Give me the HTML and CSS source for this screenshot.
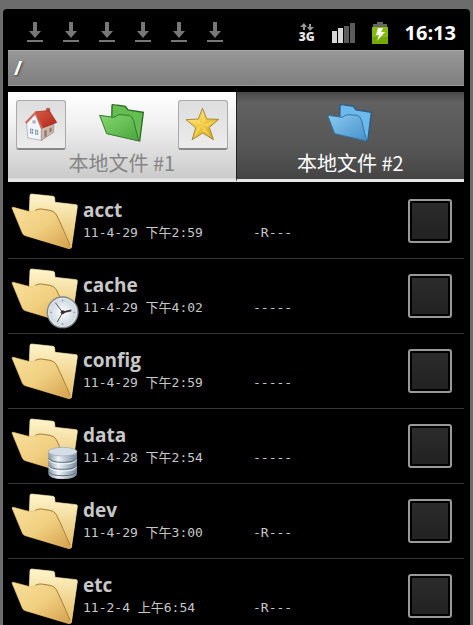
FILE: index.html
```html
<!DOCTYPE html>
<html lang="zh-CN">
<head>
  <meta charset="UTF-8">
  <meta name="viewport" content="width=device-width, initial-scale=1.0">
  <title>本地文件</title>
  <link rel="stylesheet" href="styles.css">
</head>
<body>

<!-- shared icons -->
<svg class="icon-defs" width="0" height="0" aria-hidden="true">
  <defs>
    <linearGradient id="back-fill" x1="0" y1="0" x2="0" y2="1">
      <stop offset="0" stop-color="#fff6cd"/>
      <stop offset="1" stop-color="#e5bb62"/>
    </linearGradient>
    <linearGradient id="front-fill" x1="0" y1="0" x2="1" y2="1">
      <stop offset="0" stop-color="#f9e09c"/>
      <stop offset="0.5" stop-color="#f0cf80"/>
      <stop offset="1" stop-color="#d3a04c"/>
    </linearGradient>
    <linearGradient id="green-fill" x1="0" y1="0" x2="1" y2="1">
      <stop offset="0" stop-color="#84d870"/>
      <stop offset="1" stop-color="#4aa63c"/>
    </linearGradient>
    <linearGradient id="blue-fill" x1="0" y1="0" x2="1" y2="1">
      <stop offset="0" stop-color="#8ccaf1"/>
      <stop offset="1" stop-color="#4590cb"/>
    </linearGradient>
    <linearGradient id="roof-fill" x1="0" y1="0" x2="1" y2="1">
      <stop offset="0" stop-color="#d95a48"/>
      <stop offset="1" stop-color="#ad2415"/>
    </linearGradient>
    <linearGradient id="star-fill" x1="0" y1="0" x2="1" y2="1">
      <stop offset="0" stop-color="#fbec9a"/>
      <stop offset="0.5" stop-color="#f2c93a"/>
      <stop offset="1" stop-color="#cf9618"/>
    </linearGradient>
    <linearGradient id="disk-fill" x1="0" y1="0" x2="1" y2="0">
      <stop offset="0" stop-color="#8595a3"/>
      <stop offset="0.35" stop-color="#eef3f7"/>
      <stop offset="1" stop-color="#74879a"/>
    </linearGradient>
    <radialGradient id="clock-fill">
      <stop offset="0" stop-color="#ffffff"/>
      <stop offset="1" stop-color="#ccd5de"/>
    </radialGradient>
    <symbol id="folder" viewBox="30 36 210 189">
      <path d="M95 42 L160 49 Q164 50 164 55 L165 67 L229 74 Q233 75 232 80 L214 203 L86 140 L90 46 Q91 42 95 42 Z" fill="url(#back-fill)" stroke="#fdeab0" stroke-width="2"/>
      <path d="M36 84 Q36 81 40 82 L90 95 Q98 96 106 92 Q114 87 124 88 L150 92 Q162 94 168 104 Q186 140 212 200 Q214 207 207 206 L76 167 Q70 166 67 159 Z" fill="url(#front-fill)" stroke="#edc36e" stroke-width="2"/>
      <path d="M106 91 Q114 86 124 87 L150 91 Q163 93 169 104 Q187 140 210 196" fill="none" stroke="#a6803c" stroke-width="3"/>
    </symbol>
    <symbol id="clock" viewBox="30 36 210 189">
      <circle cx="188" cy="172" r="48" fill="#7c858d"/>
      <circle cx="188" cy="172" r="42" fill="url(#clock-fill)" stroke="#e4e8ec" stroke-width="4"/>
      <path d="M188 134 v6 M188 204 v6 M150 172 h6 M220 172 h6" stroke="#8c959d" stroke-width="3"/>
      <path d="M188 172 L214 166" stroke="#333" stroke-width="5"/>
      <path d="M188 172 L166 143 M188 172 L172 201" stroke="#555" stroke-width="3"/>
      <circle cx="188" cy="172" r="6" fill="#333"/>
    </symbol>
    <symbol id="disk" viewBox="30 36 210 189">
      <path d="M145 140 V207 Q148 222 188 222 Q228 222 231 207 V140 Z" fill="url(#disk-fill)"/>
      <path d="M146 159 Q152 172 188 172 Q224 172 230 159 M146 180 Q152 193 188 193 Q224 193 230 180 M146 200 Q152 212 188 212 Q224 212 230 200" fill="none" stroke="#5f7283" stroke-width="3"/>
      <path d="M146 164 Q152 177 188 177 Q224 177 230 164 M146 185 Q152 198 188 198 Q224 198 230 185" fill="none" stroke="#f4f8fb" stroke-width="3"/>
      <ellipse cx="188" cy="140" rx="43" ry="13" fill="#d5dee6" stroke="#93a2b0" stroke-width="2"/>
    </symbol>
    <symbol id="download" viewBox="0 0 16 21">
      <path d="M6 0 H10 V9 H14 L8 16 L2 9 H6 Z" fill="#777"/>
      <path d="M0 18 H16 V20 H0 Z" fill="#777"/>
    </symbol>
  </defs>
</svg>

<div class="screen">

  <div class="status-bar">
    <div class="downloads">
      <svg><use href="#download"/></svg>
      <svg><use href="#download"/></svg>
      <svg><use href="#download"/></svg>
      <svg><use href="#download"/></svg>
      <svg><use href="#download"/></svg>
      <svg><use href="#download"/></svg>
    </div>
    <div class="indicators">
      <div class="network">
        <svg width="14" height="8" viewBox="0 0 14 8">
          <path d="M4 0 L7 4 H5 V7 H3 V4 H0 Z" fill="#999"/>
          <path d="M9 1 H11 V4 H14 L10 8 L7 4 H9 Z" fill="#999"/>
        </svg>
        <span>3G</span>
      </div>
      <svg width="23" height="20" viewBox="0 0 23 20">
        <path d="M0 8 H5 V20 H0 Z M6 5 H11 V20 H6 Z" fill="#d8d8d8"/>
        <path d="M12 3 H17 V20 H12 Z M18 0 H23 V20 H18 Z" fill="#5c5c5c"/>
      </svg>
      <svg width="16" height="22" viewBox="0 0 16 22">
        <path d="M5 0 H11 V2 H15 V5 H1 V2 H5 Z" fill="#666"/>
        <path d="M0 5 H16 V22 H0 Z" fill="#86bd0c"/>
        <path d="M0 15 H16 V22 H0 Z" fill="#74a808"/>
        <path d="M6 6 H11 L9 10 H13 L5 19 L7 13 H4 Z" fill="#fff"/>
      </svg>
      <span class="time">16:13</span>
    </div>
  </div>

  <div class="path-bar">/</div>

  <div class="tabs">
    <div class="tab tab-light">
      <button class="tool-button" aria-label="home">
        <svg width="34" height="36" viewBox="0 0 108 114">
          <path d="M8 46 L35 22 L56 68 L55 106 L12 98 Z" fill="#f3f5f8" stroke="#999" stroke-width="2"/>
          <path d="M55 66 L94 53 V80 L55 106 Z" fill="#cbb9ae" stroke="#8f8178" stroke-width="2"/>
          <path d="M71 14 V4 H82 V30 L71 24 Z" fill="#b5543f" stroke="#88402f" stroke-width="1"/>
          <path d="M36 15 L80 11 L104 49 L57 67 Z" fill="url(#roof-fill)" stroke="#9c2617" stroke-width="2"/>
          <path d="M36 14 L3 48 L8 53 L36 24 L54 69 L60 66 Z" fill="#cf6654"/>
          <path d="M19 68 L29 70 V86 L19 84 Z M35 71 L45 73 V89 L35 87 Z" fill="#7f94a8"/>
          <path d="M24 68 V86 M40 71 V89 M19 76 L45 81" stroke="#e9eef2" stroke-width="2"/>
          <circle cx="32" cy="47" r="6" fill="#a9b8c6"/>
          <path d="M65 75 L72 72 V93 L65 97 Z M81 67 L88 64 V77 L81 81 Z" fill="#8f7567"/>
        </svg>
      </button>
      <button class="tab-main">
        <svg class="tab-icon" viewBox="0 0 138 120">
          <path d="M39 4 Q40 1 45 2 L79 7 L87 18 L133 25 L122 111 L38 65 Z" fill="#62bf50" stroke="#30672a" stroke-width="4"/>
          <path d="M2 34 L45 40 L60 32 L91 34 Q99 36 104 50 L119 111 L23 89 Z" fill="url(#green-fill)" stroke="#38782f" stroke-width="3"/>
        </svg>
        <span>本地文件 #1</span>
      </button>
      <button class="tool-button" aria-label="bookmarks">
        <svg width="35" height="35" viewBox="0 0 108 108">
          <path d="M54 4 L67 37 L104 38 L75 63 L88 101 L55 80 L22 101 L33 64 L3 39 L41 37 Z" fill="url(#star-fill)" stroke="#a48639" stroke-width="3" stroke-linejoin="round"/>
          <path d="M54 12 L62 40 L54 55 Z M95 42 L70 61 L54 55 Z M81 93 L55 74 L54 55 Z M28 94 L39 63 L54 55 Z M12 42 L44 42 L54 55 Z" fill="#fff0a0" opacity="0.4"/>
        </svg>
      </button>
    </div>
    <div class="tab tab-dark">
      <button class="tab-main">
        <svg class="tab-icon" viewBox="0 0 138 120">
          <path d="M39 4 Q40 1 45 2 L79 7 L87 18 L133 25 L122 111 L38 65 Z" fill="#6db9ec" stroke="#285c86" stroke-width="4"/>
          <path d="M2 34 L45 40 L60 32 L91 34 Q99 36 104 50 L119 111 L23 89 Z" fill="url(#blue-fill)" stroke="#3274a5" stroke-width="3"/>
        </svg>
        <span>本地文件 #2</span>
      </button>
    </div>
  </div>

  <ul class="file-list">
    <li>
      <svg class="file-icon"><use href="#folder"/></svg>
      <div class="file-info">
        <label class="file-name" for="file-acct">acct</label>
        <div class="file-meta"><span class="file-date">11-4-29 下午2:59</span><span>-R---</span></div>
      </div>
      <input type="checkbox" id="file-acct">
    </li>
    <li>
      <svg class="file-icon"><use href="#folder"/><use href="#clock"/></svg>
      <div class="file-info">
        <label class="file-name" for="file-cache">cache</label>
        <div class="file-meta"><span class="file-date">11-4-29 下午4:02</span><span>-----</span></div>
      </div>
      <input type="checkbox" id="file-cache">
    </li>
    <li>
      <svg class="file-icon"><use href="#folder"/></svg>
      <div class="file-info">
        <label class="file-name" for="file-config">config</label>
        <div class="file-meta"><span class="file-date">11-4-29 下午2:59</span><span>-----</span></div>
      </div>
      <input type="checkbox" id="file-config">
    </li>
    <li>
      <svg class="file-icon"><use href="#folder"/><use href="#disk"/></svg>
      <div class="file-info">
        <label class="file-name" for="file-data">data</label>
        <div class="file-meta"><span class="file-date">11-4-28 下午2:54</span><span>-----</span></div>
      </div>
      <input type="checkbox" id="file-data">
    </li>
    <li>
      <svg class="file-icon"><use href="#folder"/></svg>
      <div class="file-info">
        <label class="file-name" for="file-dev">dev</label>
        <div class="file-meta"><span class="file-date">11-4-29 下午3:00</span><span>-R---</span></div>
      </div>
      <input type="checkbox" id="file-dev">
    </li>
    <li>
      <svg class="file-icon"><use href="#folder"/></svg>
      <div class="file-info">
        <label class="file-name" for="file-etc">etc</label>
        <div class="file-meta"><span class="file-date">11-2-4 上午6:54</span><span>-R---</span></div>
      </div>
      <input type="checkbox" id="file-etc">
    </li>
  </ul>

</div>

</body>
</html>
```

FILE: styles.css
```css
* {
  box-sizing: border-box;
}

body {
  display: flex;
  height: 100vh;
  margin: 0;
  padding: 9px 3px 0;
  background-color: #6c6c6c;
  font-family: "Open Sans", "Noto Sans CJK SC", sans-serif;
  overflow: hidden;
}

.icon-defs {
  position: absolute;
}

/* phone screen */
.screen {
  display: flex;
  flex-direction: column;
  flex: 1;
  min-width: 0;
  padding: 0 6px 0 5px;
  background-color: #000;
  border-radius: 4px 4px 0 0;
}

/* status bar */
.status-bar {
  display: flex;
  flex-shrink: 0;
  justify-content: space-between;
  align-items: center;
  height: 41px;
  padding: 6px 8px 0 19px;
}

.downloads {
  display: flex;
  gap: 20px;
}

.downloads svg {
  width: 16px;
  height: 21px;
}

.indicators {
  display: flex;
  align-items: center;
  gap: 17px;
}

.network {
  display: flex;
  flex-direction: column;
  align-items: center;
  color: #e4e4e4;
  font-size: 12px;
  font-weight: 800;
  line-height: 12px;
}

.time {
  color: #fff;
  font-size: 20px;
  font-weight: bold;
  line-height: 24px;
}

/* current folder */
.path-bar {
  flex-shrink: 0;
  height: 36px;
  margin-bottom: 6px;
  padding-left: 6px;
  background: linear-gradient(#979797, #7f7f7f);
  border-top: 1px solid #a8a8a8;
  border-bottom: 1px solid #999;
  color: #fff;
  font-size: 20px;
  font-weight: bold;
  line-height: 34px;
  text-shadow: 1px 1px 2px #444;
}

/* tabs */
.tabs {
  display: flex;
  flex-shrink: 0;
  height: 90px;
}

.tab {
  display: flex;
  flex: 1;
  align-items: flex-start;
  padding: 8px;
}

.tab-light {
  background: linear-gradient(#fff, #f1f1f1 35%, #cbcbcb 95%, #e6e6e6 97%);
  color: #858585;
}

.tab-dark {
  background: linear-gradient(#484848, #616161 12%, #565656 65%, #444);
  border-left: 1px solid #222;
  border-bottom: 3px solid #e6e6e6;
  color: #fff;
}

.tab-main {
  display: flex;
  flex: 1;
  flex-direction: column;
  align-items: center;
  gap: 7px;
  padding: 4px 0 0;
  background: none;
  border: none;
  color: inherit;
  font-family: "Noto Sans CJK SC", sans-serif;
  font-size: 20px;
  line-height: 24px;
  white-space: nowrap;
}

.tab-icon {
  width: 46px;
  height: 40px;
}

.tool-button {
  display: flex;
  justify-content: center;
  align-items: center;
  width: 50px;
  height: 50px;
  padding: 0;
  background: linear-gradient(#dedede, #ececec);
  border: 1px solid #aaa;
  border-bottom: 2px solid #888;
  border-radius: 3px;
}

/* files */
.file-list {
  flex: 1;
  min-height: 0;
  margin: 0;
  padding: 2px 0 0;
  list-style: none;
  overflow: hidden;
}

.file-list li {
  display: flex;
  align-items: center;
  height: 75px;
  padding: 0 12px 0 2px;
  border-bottom: 1px solid #363636;
}

.file-icon {
  width: 70px;
  height: 63px;
  margin: 4px 3px 0 0;
}

.file-info {
  flex: 1;
  color: #c8c8c8;
}

.file-name {
  display: block;
  font-size: 19px;
  font-weight: bold;
  line-height: 24px;
}

.file-meta {
  display: flex;
  font-family: "DejaVu Sans Mono", "Noto Sans CJK SC", monospace;
  font-size: 13px;
  line-height: 22px;
}

.file-date {
  width: 170px;
}

.file-list input {
  appearance: none;
  width: 44px;
  height: 44px;
  margin: 0;
  padding: 2px;
  background: linear-gradient(#2b2b2b, #222) content-box;
  border: 2px solid #999;
  border-radius: 3px;
}
```
